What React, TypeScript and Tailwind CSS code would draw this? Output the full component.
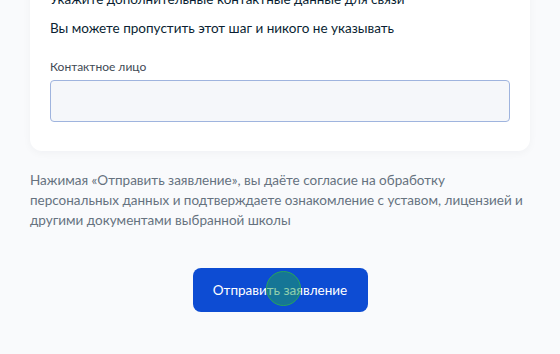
import React from 'react';

const font = { fontFamily: 'Lato, "Noto Sans", Arial, sans-serif' };

export default function App() {
  return (
    <div style={font} className="w-[560px] h-[354px] overflow-hidden bg-[#f9fafc]">
      <div className="mx-[30px] w-[500px]">
        {/* Contact card, scrolled so its top is above the viewport */}
        <div className="mt-[-33px] rounded-xl bg-white px-5 pt-[20px] pb-[29px] shadow-[0_2px_8px_rgba(11,31,51,0.04)]">
          <h3 className="text-[13.5px] leading-6 text-[#0b1f33]">
            Укажите дополнительные контактные данные для связи
          </h3>
          <p className="mt-[5px] text-[13.5px] leading-6 text-[#0b1f33]">
            Вы можете пропустить этот шаг и никого не указывать
          </p>
          <label className="mt-[17px] block text-[12px] leading-5 text-[#3f4a55]">
            Контактное лицо
          </label>
          <input
            type="text"
            className="mt-[3px] block h-[42px] w-full rounded-[4px] border border-[#9fb4de] bg-[#f5f7fa] px-3 text-[14px] text-[#0b1f33] outline-none"
          />
        </div>

        <p className="mt-[19px] text-[13.5px] leading-5 text-[#66727f]">
          Нажимая «Отправить заявление», вы даёте согласие на обработку персональных данных и подтверждаете ознакомление с уставом, лицензией и другими документами выбранной школы
        </p>

        <div className="mt-[38px] flex justify-center">
          <button className="relative h-[44px] w-[175px] rounded-lg bg-[#0d4cd3] text-[13.5px] text-white">
            Отправить заявление
            <span className="pointer-events-none absolute left-[73px] top-[3px] h-[35px] w-[35px] rounded-full border-[1.5px] border-[#27a35e] bg-[rgba(30,160,90,0.5)]" />
          </button>
        </div>
      </div>
    </div>
  );
}
